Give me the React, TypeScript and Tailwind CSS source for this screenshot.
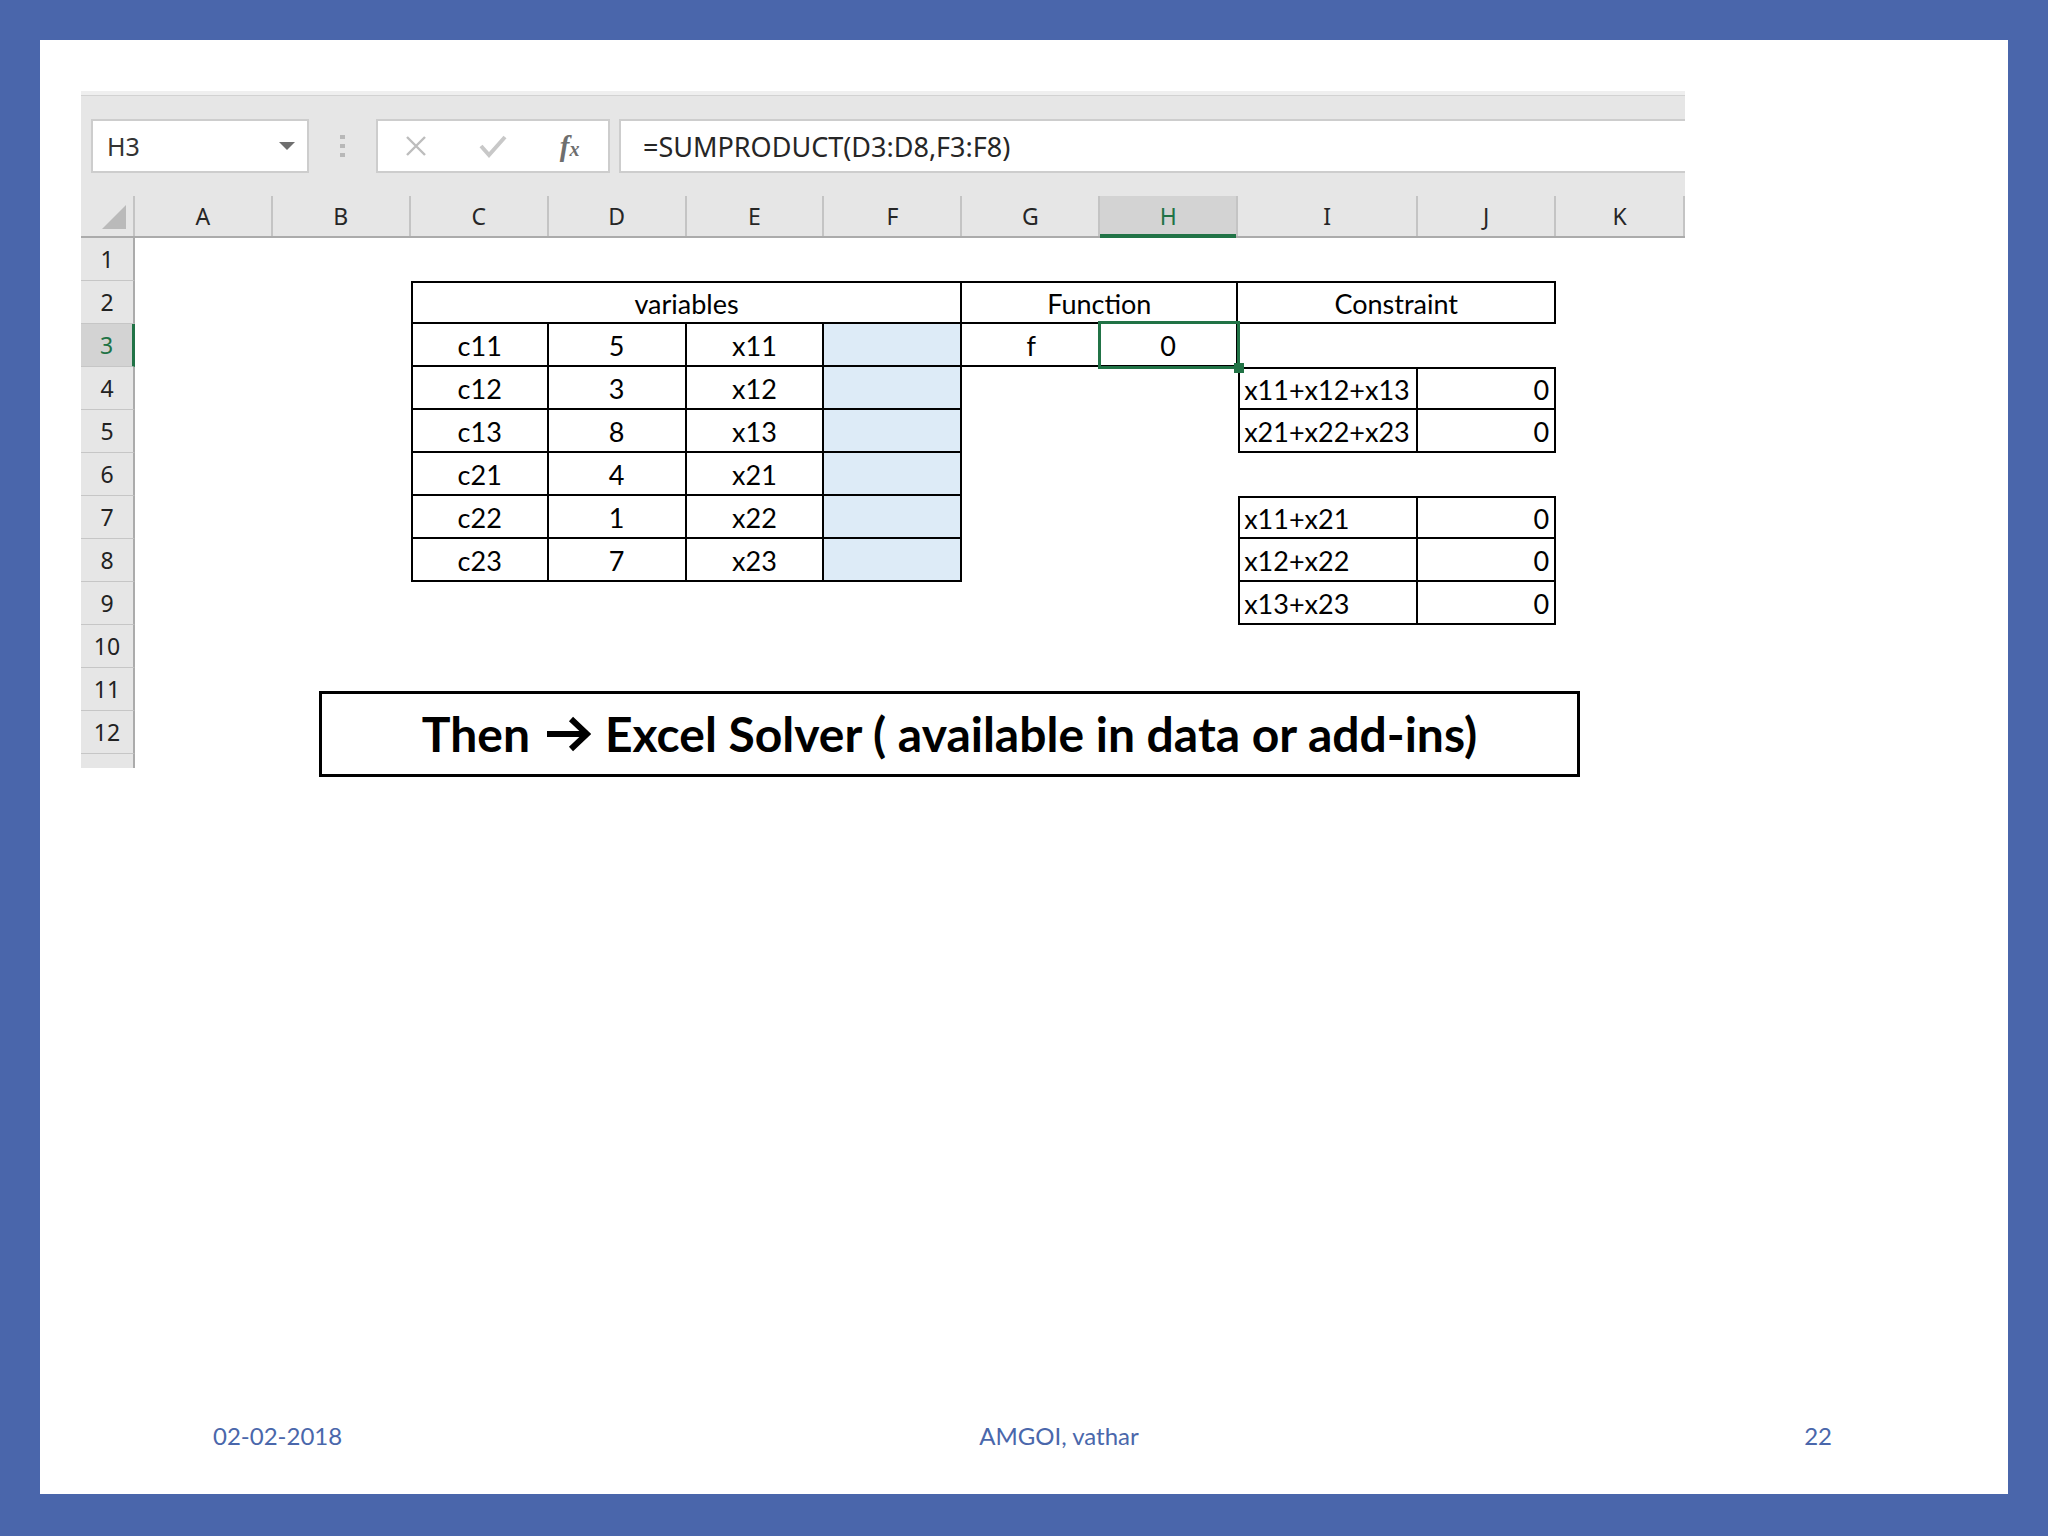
import React from "react";

const W = {
  A: "w-[137.9px]",
  B: "w-[137.9px]",
  C: "w-[137.9px]",
  D: "w-[137.9px]",
  E: "w-[137.9px]",
  F: "w-[137.9px]",
  G: "w-[137.9px]",
  H: "w-[137.9px]",
  I: "w-[180px]",
  J: "w-[138px]",
  K: "w-[129px]",
};

const COLS: (keyof typeof W)[] = ["A", "B", "C", "D", "E", "F", "G", "H", "I", "J", "K"];

function Cell({
  w,
  cls = "",
  children,
}: {
  w: string;
  cls?: string;
  children?: React.ReactNode;
}) {
  return (
    <div className={`${w} h-full shrink-0 flex items-center pt-[4px] ${cls}`}>{children}</div>
  );
}

function RowHead({ n, active = false }: { n: number; active?: boolean }) {
  return (
    <div
      className={
        active
          ? "w-[54px] h-full shrink-0 flex items-center justify-center bg-[#d3d3d3] border-b border-[#c6c6c6] border-r-[3px] border-r-[#217346] text-[#217346]"
          : "w-[54px] h-full shrink-0 flex items-center justify-center bg-[#e6e6e6] border-b border-[#c6c6c6] border-r-2 border-r-[#ababab] text-[#222]"
      }
      style={{ fontFamily: '"Noto Sans", sans-serif', fontSize: 0 }}
    >
      <span className="text-[23px] leading-none">{n}</span>
    </div>
  );
}

const bodyFont = { fontFamily: 'Lato, "Open Sans", sans-serif' };

function VarCells({ c, d, x }: { c: string; d: string; x: string }) {
  return (
    <>
      <Cell w={W.C} cls="justify-center border-l-2 border-r-2 border-b-2 border-black">{c}</Cell>
      <Cell w={W.D} cls="justify-center border-r-2 border-b-2 border-black">{d}</Cell>
      <Cell w={W.E} cls="justify-center border-r-2 border-b-2 border-black">{x}</Cell>
      <Cell w={W.F} cls="border-r-2 border-b-2 border-black bg-[#ddebf7]" />
    </>
  );
}

function ConCells({ label, top = false }: { label: string; top?: boolean }) {
  return (
    <>
      <Cell
        w={W.I}
        cls={`justify-start pl-[4px] border-l-2 border-r-2 border-b-2 border-black ${top ? "border-t-2" : ""}`}
      >
        {label}
      </Cell>
      <Cell
        w={W.J}
        cls={`justify-end pr-[5px] border-r-2 border-b-2 border-black ${top ? "border-t-2" : ""}`}
      >
        0
      </Cell>
    </>
  );
}

function Row({ n, children, active = false }: { n: number; children?: React.ReactNode; active?: boolean }) {
  return (
    <div className="flex h-[43px] text-[27px] text-black" style={bodyFont}>
      <RowHead n={n} active={active} />
      {children}
    </div>
  );
}

function Toolbar() {
  return (
    <div className="bg-[#e6e6e6]">
      <div className="h-[4px] bg-[#efefef]" />
      <div className="h-[1px] bg-[#d2d2d2]" />
      <div className="flex items-center pl-[10px] pt-[23px] pb-[23px]">
        <div className="w-[218px] h-[54px] shrink-0 bg-white border-2 border-[#cdcdcd] flex items-center pl-[14px] pr-[12px]">
          <span
            className="text-[25px] text-[#333] flex-1 leading-none"
            style={{ fontFamily: '"Noto Sans", sans-serif' }}
          >
            H3
          </span>
          <svg width="16" height="8" viewBox="0 0 16 8">
            <polygon points="0,0 16,0 8,8" fill="#6f6f6f" />
          </svg>
        </div>
        <div className="w-[67px] h-[54px] shrink-0 flex flex-col items-center justify-center gap-[5px]">
          <div className="w-[5px] h-[4px] bg-[#b8b8b8]" />
          <div className="w-[5px] h-[4px] bg-[#b8b8b8]" />
          <div className="w-[5px] h-[4px] bg-[#b8b8b8]" />
        </div>
        <div className="w-[234px] h-[54px] shrink-0 bg-white border-2 border-[#cdcdcd] flex items-center">
          <div className="flex-1 flex justify-center">
            <svg width="22" height="22" viewBox="0 0 22 22">
              <path d="M2 2 L20 20 M20 2 L2 20" stroke="#bdbdbd" strokeWidth="2.4" fill="none" />
            </svg>
          </div>
          <div className="flex-1 flex justify-center">
            <svg width="28" height="24" viewBox="0 0 28 24">
              <path d="M2 12 L10 21 L26 3" stroke="#c8c8c8" strokeWidth="4" fill="none" />
            </svg>
          </div>
          <div className="flex-1 flex justify-center">
            <span
              className="italic font-bold text-[29px] text-[#6e6e6e] leading-none"
              style={{ fontFamily: '"Liberation Serif", serif' }}
            >
              f<span className="text-[20px]">x</span>
            </span>
          </div>
        </div>
        <div className="ml-[9px] flex-1 h-[54px] bg-white border-y-2 border-l-2 border-[#cdcdcd] flex items-center pl-[22px]">
          <span
            className="text-[27px] text-[#262626] leading-none"
            style={{ fontFamily: '"Noto Sans", sans-serif' }}
          >
            =SUMPRODUCT(D3:D8,F3:F8)
          </span>
        </div>
      </div>
    </div>
  );
}

function HeaderRow() {
  return (
    <div
      className="flex h-[42px] bg-[#e6e6e6] border-b-2 border-[#ababab] text-[23px] text-[#262626]"
      style={{ fontFamily: '"Noto Sans", sans-serif' }}
    >
      <div className="w-[54px] shrink-0 relative border-r-2 border-[#c4c4c4]">
        <svg className="absolute right-[7px] bottom-[7px]" width="24" height="24" viewBox="0 0 24 24">
          <polygon points="24,0 24,24 0,24" fill="#bababa" />
        </svg>
      </div>
      {COLS.map((c) =>
        c === "H" ? (
          <div
            key={c}
            className={`${W[c]} shrink-0 relative flex items-center justify-center bg-[#d3d3d3] text-[#217346] border-r-2 border-[#c4c4c4]`}
          >
            {c}
            <div className="absolute left-0 right-0 bottom-[-2px] h-[4px] bg-[#217346]" />
          </div>
        ) : (
          <div
            key={c}
            className={`${W[c]} shrink-0 flex items-center justify-center border-r-2 border-[#c4c4c4] ${c === "K" ? "border-r-0" : ""}`}
          >
            {c}
          </div>
        )
      )}
    </div>
  );
}

function Excel() {
  return (
    <div className="ml-[41px] mt-[51px] w-[1604px] overflow-hidden">
      <Toolbar />
      <HeaderRow />
      <div className="bg-white">
        <Row n={1} />
        <Row n={2}>
          <Cell w={W.A} />
          <Cell w={W.B} />
          <Cell w="w-[551.6px]" cls="justify-center border-2 border-black">
            variables
          </Cell>
          <Cell w="w-[275.8px]" cls="justify-center border-t-2 border-r-2 border-b-2 border-black">
            Function
          </Cell>
          <Cell w="w-[318px]" cls="justify-center border-t-2 border-r-2 border-b-2 border-black">
            Constraint
          </Cell>
        </Row>
        <Row n={3} active>
          <Cell w={W.A} />
          <Cell w={W.B} />
          <VarCells c="c11" d="5" x="x11" />
          <Cell w={W.G} cls="justify-center border-b-2 border-black">
            f
          </Cell>
          <div className={`${W.H} h-full shrink-0 relative`}>
            <Cell w="w-full" cls="justify-center border-r-2 border-b-2 border-black">
              0
            </Cell>
            <div className="absolute left-[-2px] right-[-2px] top-[-3px] bottom-[-2px] border-[3px] border-[#217346] z-10" />
            <div className="absolute right-[-6px] bottom-[-6px] w-[10px] h-[10px] bg-[#217346] z-20" />
          </div>
        </Row>
        <Row n={4}>
          <Cell w={W.A} />
          <Cell w={W.B} />
          <VarCells c="c12" d="3" x="x12" />
          <Cell w={W.G} />
          <Cell w={W.H} />
          <ConCells label="x11+x12+x13" top />
        </Row>
        <Row n={5}>
          <Cell w={W.A} />
          <Cell w={W.B} />
          <VarCells c="c13" d="8" x="x13" />
          <Cell w={W.G} />
          <Cell w={W.H} />
          <ConCells label="x21+x22+x23" />
        </Row>
        <Row n={6}>
          <Cell w={W.A} />
          <Cell w={W.B} />
          <VarCells c="c21" d="4" x="x21" />
        </Row>
        <Row n={7}>
          <Cell w={W.A} />
          <Cell w={W.B} />
          <VarCells c="c22" d="1" x="x22" />
          <Cell w={W.G} />
          <Cell w={W.H} />
          <ConCells label="x11+x21" top />
        </Row>
        <Row n={8}>
          <Cell w={W.A} />
          <Cell w={W.B} />
          <VarCells c="c23" d="7" x="x23" />
          <Cell w={W.G} />
          <Cell w={W.H} />
          <ConCells label="x12+x22" />
        </Row>
        <Row n={9}>
          <Cell w={W.A} />
          <Cell w={W.B} />
          <Cell w={W.C} />
          <Cell w={W.D} />
          <Cell w={W.E} />
          <Cell w={W.F} />
          <Cell w={W.G} />
          <Cell w={W.H} />
          <ConCells label="x13+x23" />
        </Row>
        <Row n={10} />
        <Row n={11} />
        <Row n={12} />
        <div className="flex h-[14px]">
          <div className="w-[54px] h-full bg-[#e6e6e6] border-r-2 border-[#ababab]" />
        </div>
      </div>
    </div>
  );
}

export default function App() {
  return (
    <div className="w-[2048px] h-[1536px] bg-[#4a66ab] pt-[40px] pl-[40px] pr-[40px] pb-[42px]">
      <div className="relative w-full h-full bg-white flex flex-col">
        <Excel />
        <div className="flex-1" />
        <div
          className="flex items-center h-[40px] mb-[38px] pl-[173px] pr-[176px] text-[24px] text-[#4a67ab]"
          style={{ fontFamily: 'Lato, "Open Sans", sans-serif' }}
        >
          <div className="w-[300px] shrink-0">02-02-2018</div>
          <div className="flex-1 text-center">AMGOI, vathar</div>
          <div className="w-[227px] shrink-0 text-right">22</div>
        </div>
        <div className="absolute left-[279px] top-[651px] w-[1261px] h-[86px] bg-white border-[3px] border-black flex items-center justify-center">
          <div
            className="flex items-center text-[48px] font-bold text-black leading-none"
            style={{ fontFamily: 'Lato, "Open Sans", sans-serif' }}
          >
            <span>Then</span>
            <svg className="ml-[15px] mr-[14px]" width="46" height="38" viewBox="0 0 46 38">
              <path d="M2 19 L40 19" stroke="black" strokeWidth="6" fill="none" />
              <path d="M26 4 L42 19 L26 34" stroke="black" strokeWidth="6" fill="none" />
            </svg>
            <span>Excel Solver ( available in data or add-ins)</span>
          </div>
        </div>
      </div>
    </div>
  );
}
